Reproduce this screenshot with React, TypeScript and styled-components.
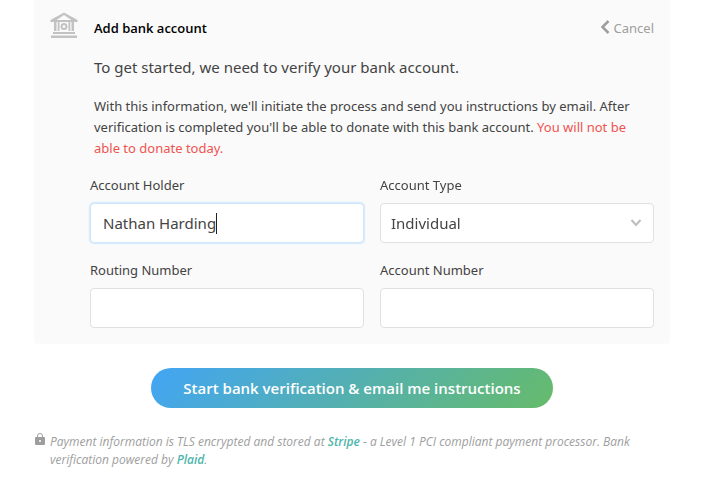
import React from "react";
import styled, { createGlobalStyle, css } from "styled-components";

const GlobalStyle = createGlobalStyle`
  *, *::before, *::after { box-sizing: border-box; }
  body {
    margin: 0;
    background: #ffffff;
    color: #434343;
    font-family: "Segoe UI", "Noto Sans", "Open Sans", sans-serif;
    font-size: 13px;
    line-height: 21px;
  }
  p, h2 { margin: 0; }
`;

const Page = styled.main`
  padding: 0 41px 12px 34px;
`;

const Panel = styled.section`
  padding: 0 16px 16px;
  background: #fafafa;
  border-radius: 0 0 4px 4px;
`;

const PanelHeader = styled.header`
  display: flex;
  align-items: center;
  gap: 16px;
  height: 56px;
`;

const BankIcon = styled.svg`
  width: 28px;
  height: 28px;
  margin-bottom: 6px;
  fill: #c2c2c2;
`;

const Title = styled.h2`
  flex: 1;
  color: #000000;
  font-family: "Segoe UI", "Open Sans", "Noto Sans", sans-serif;
  font-size: 13px;
  font-weight: 600;
  line-height: 20px;
`;

const CancelButton = styled.button`
  display: flex;
  align-items: center;
  gap: 4px;
  padding: 0;
  border: 0;
  background: none;
  color: #9e9e9e;
  font: inherit;
  cursor: pointer;
`;

const CancelIcon = styled.svg`
  width: 10px;
  height: 14px;
  margin-bottom: 2px;
  fill: none;
  stroke: #9e9e9e;
  stroke-width: 2.5;
`;

const Intro = styled.div`
  padding: 0 16px 0 44px;
`;

const Lead = styled.p`
  font-size: 15px;
  line-height: 22px;
`;

const Details = styled.p`
  margin-top: 18px;
`;

const Warning = styled.span`
  color: #ef5350;
`;

const Fields = styled.div`
  display: grid;
  grid-template-columns: 1fr 1fr;
  gap: 17px 16px;
  margin-top: 16px;
  padding-left: 40px;
`;

const Field = styled.div`
  display: flex;
  flex-direction: column;
  gap: 7px;
`;

const control = css`
  width: 100%;
  height: 40px;
  border: 1px solid #e0e0e0;
  border-radius: 4px;
  outline: none;
  background: #ffffff;
  color: #434343;
  font: inherit;
  font-size: 15px;
`;

const TextInput = styled.input<{ $active?: boolean }>`
  ${control}
  padding: 0 12px;
  ${(p) =>
    p.$active &&
    css`
      border-color: #d0e7fb;
      box-shadow: 0 0 0 1px #d8ebfc, 0 0 3px #d8ebfc;
      caret-color: transparent;
    `}
`;

const ControlStack = styled.div`
  display: grid;
  align-items: center;

  & > * { grid-area: 1 / 1; }
`;

const Caret = styled.span`
  width: 1px;
  height: 21px;
  margin-left: 126px;
  background: #212121;
  pointer-events: none;
`;

const Select = styled.select`
  ${control}
  padding: 0 32px 0 10px;
  appearance: none;
`;

const SelectArrow = styled.svg`
  justify-self: end;
  width: 12px;
  height: 8px;
  margin-right: 12px;
  fill: none;
  stroke: #bdbdbd;
  stroke-width: 2;
  pointer-events: none;
`;

const SubmitButton = styled.button`
  display: block;
  height: 40px;
  margin: 24px auto 25px;
  padding: 0 32px;
  border: 0;
  border-radius: 20px;
  background: linear-gradient(135deg, #42a5f5, #66bb6a);
  color: #ffffff;
  font-family: "Segoe UI", "Open Sans", "Noto Sans", sans-serif;
  font-size: 15px;
  font-weight: 600;
  cursor: pointer;
`;

const Notice = styled.footer`
  display: flex;
  align-items: flex-start;
  gap: 4px;
  color: #9e9e9e;
  font-family: "Segoe UI", "Open Sans", "Noto Sans", sans-serif;
  font-size: 12px;
  font-style: italic;
  line-height: 18px;
`;

const LockIcon = styled.svg`
  flex: none;
  width: 12px;
  height: 14px;
`;

const NoticeLink = styled.a`
  color: #4db6ac;
  font-weight: 600;
  text-decoration: none;
`;

export default function App() {
  return (
    <>
      <GlobalStyle />
      <Page>
        <Panel>
          <PanelHeader>
            <BankIcon viewBox="0 0 28 28" aria-hidden="true">
              <path fillRule="evenodd" d="M14 1.500 27.500 9v2H.5V9ZM14 4 6.500 9h15Z" />
              <path d="M4 11h2.500v9H4zM7.700 11h1.800v9H7.700zM18.500 11h1.800v9h-1.800zM21.500 11H24v9h-2.500z" />
              <circle cx="14" cy="15.500" r="2.500" fill="none" stroke="#c2c2c2" strokeWidth="2" />
              <path d="M3 21h22v2H3zM1 24.500h26V27H1z" />
            </BankIcon>
            <Title>Add bank account</Title>
            <CancelButton type="button">
              <CancelIcon viewBox="0 0 10 14" aria-hidden="true">
                <path d="M8.500 1 2.500 7l6 6" />
              </CancelIcon>
              Cancel
            </CancelButton>
          </PanelHeader>
          <Intro>
            <Lead>To get started, we need to verify your bank account.</Lead>
            <Details>
              With this information, we'll initiate the process and send you instructions by email.
              After verification is completed you'll be able to donate with this bank account.{" "}
              <Warning>You will not be able to donate today.</Warning>
            </Details>
          </Intro>
          <Fields>
            <Field>
              <label htmlFor="holder">Account Holder</label>
              <ControlStack>
                <TextInput id="holder" defaultValue="Nathan Harding" autoFocus $active />
                <Caret aria-hidden="true" />
              </ControlStack>
            </Field>
            <Field>
              <label htmlFor="type">Account Type</label>
              <ControlStack>
                <Select id="type" defaultValue="Individual">
                  <option>Individual</option>
                  <option>Company</option>
                </Select>
                <SelectArrow viewBox="0 0 12 8" aria-hidden="true">
                  <path d="m1.500 1 4.500 5 4.500-5" />
                </SelectArrow>
              </ControlStack>
            </Field>
            <Field>
              <label htmlFor="routing">Routing Number</label>
              <TextInput id="routing" inputMode="numeric" />
            </Field>
            <Field>
              <label htmlFor="account">Account Number</label>
              <TextInput id="account" inputMode="numeric" />
            </Field>
          </Fields>
        </Panel>
        <SubmitButton type="button">Start bank verification &amp; email me instructions</SubmitButton>
        <Notice>
          <LockIcon viewBox="0 0 12 14" aria-hidden="true">
            <rect x="1" y="4" width="10" height="8" rx="1" fill="#9e9e9e" />
            <path d="M3.500 4.500V3a2.500 2.500 0 0 1 5 0v1.500" fill="none" stroke="#9e9e9e" />
            <circle cx="6" cy="8" r="1" fill="#ffffff" />
          </LockIcon>
          <p>
            Payment information is TLS encrypted and stored at <NoticeLink href="#stripe">Stripe</NoticeLink> - a
            Level 1 PCI compliant payment processor. Bank verification powered by{" "}
            <NoticeLink href="#plaid">Plaid</NoticeLink>.
          </p>
        </Notice>
      </Page>
    </>
  );
}
